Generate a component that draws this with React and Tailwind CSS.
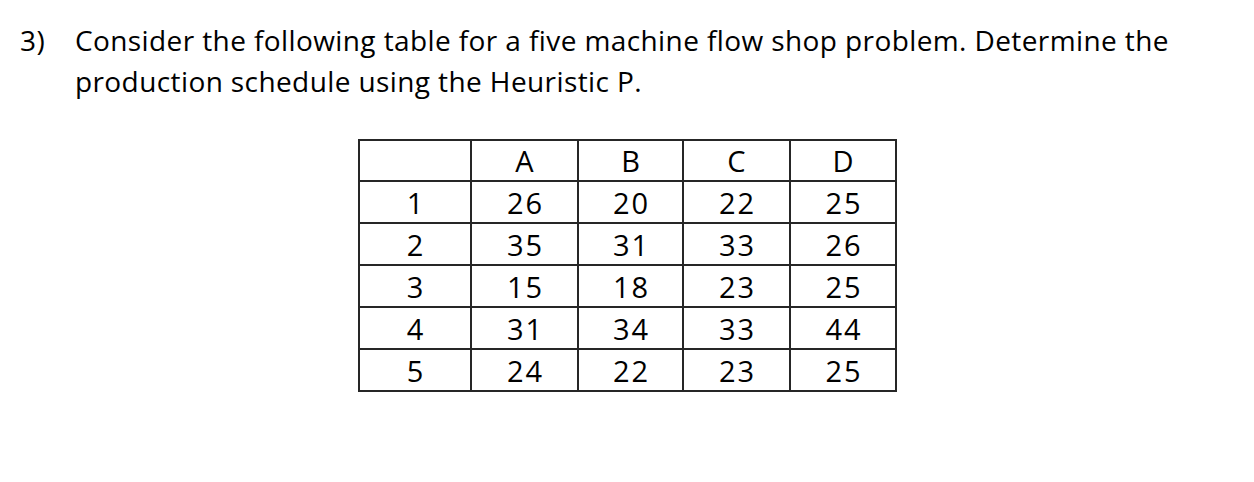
import React from "react";

const header = ["", "A", "B", "C", "D"];

const rows = [
  ["1", "26", "20", "22", "25"],
  ["2", "35", "31", "33", "26"],
  ["3", "15", "18", "23", "25"],
  ["4", "31", "34", "33", "44"],
  ["5", "24", "22", "23", "25"],
];

const Cell = ({ children, tall }) => (
  <div
    className={`flex items-center justify-center border-r-2 border-b-2 border-[#262626] ${
      tall ? "h-[42px]" : "h-[41px]"
    }`}
  >
    <span className="pl-[2px]">{children}</span>
  </div>
);

const App = () => {
  return (
    <div className="w-[1254px] h-[482px] bg-white text-black font-['Open_Sans',Arial,sans-serif] font-medium">
      <div className="flex pt-[20px] pl-[20px] text-[28px] leading-[41px] tracking-[0.4px]">
        <span className="w-[55px] shrink-0">3)</span>
        <p className="w-[1110px]">
          Consider the following table for a five machine flow shop problem. Determine the
          production schedule using the Heuristic P.
        </p>
      </div>
      <div className="ml-[358px] mt-[37px] grid w-fit grid-cols-[112px_107px_105px_107px_106px] border-t-2 border-l-2 border-[#262626] text-[29px] leading-[41px] tracking-[2px]">
        {header.map((h, i) => (
          <Cell key={"h" + i}>{h}</Cell>
        ))}
        {rows.map((row, r) =>
          row.map((v, c) => (
            <Cell key={r + "-" + c} tall>
              {v}
            </Cell>
          ))
        )}
      </div>
    </div>
  );
};

export default App;
